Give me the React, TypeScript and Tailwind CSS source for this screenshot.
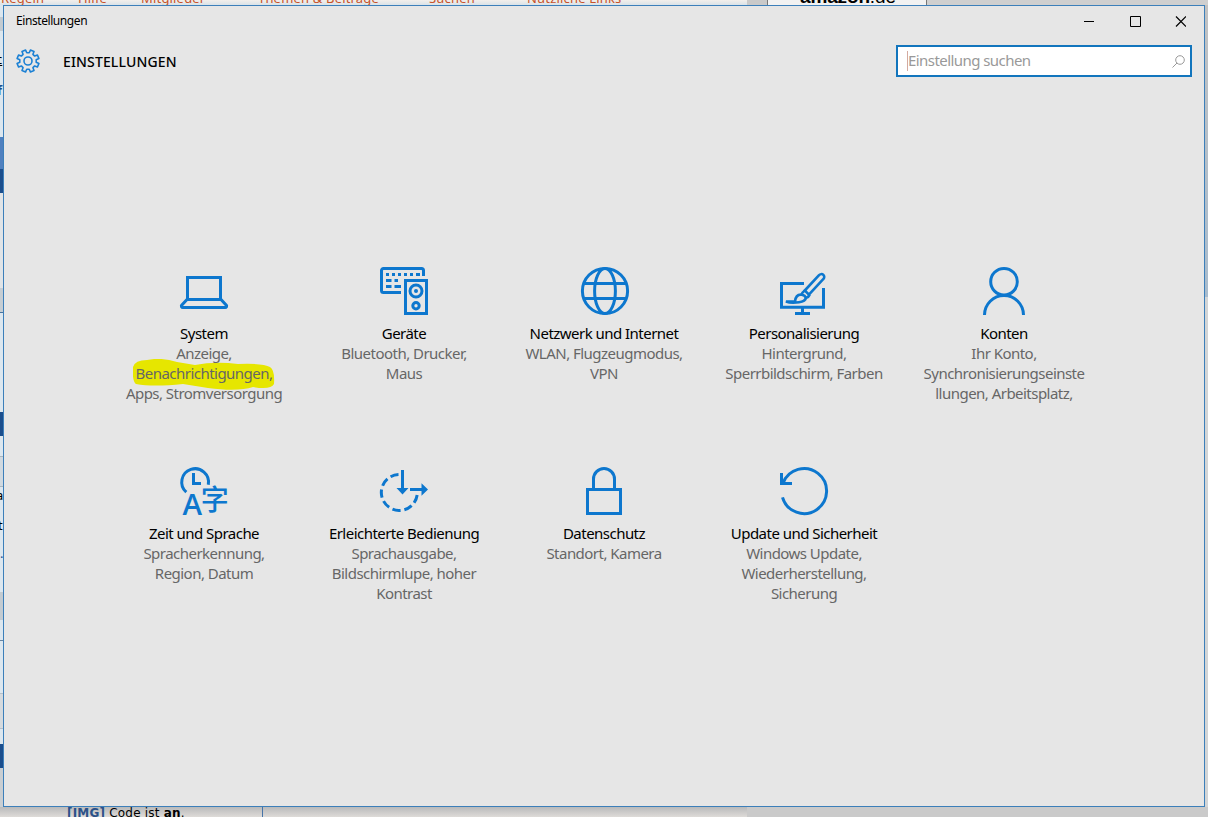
import type { ReactNode } from 'react';

interface Category {
  title: string;
  lines: string[];
  icon: ReactNode;
  highlighted?: boolean;
}

function Icon({ children }: { children: ReactNode }) {
  return (
    <svg className="h-12 w-12 overflow-visible" viewBox="0 0 48 48" fill="none" stroke="#0d77ce" strokeWidth="3">
      {children}
    </svg>
  );
}

function LaptopIcon() {
  return (
    <Icon>
      <path d="M7.5 32V10.5h33V32M7 32.5h34l5.3 5.6c.8 1.2.1 2.4-1.2 2.4H2.9c-1.3 0-2-1.2-1.2-2.4z" />
    </Icon>
  );
}

function DevicesIcon() {
  return (
    <Icon>
      <path d="M21 25.5H3.5a2 2 0 0 1-2-2v-20a2 2 0 0 1 2-2h38a2 2 0 0 1 2 2V9" />
      <path d="M6 7.5h3m3 0h3m3 0h3m3 0h3m3 0h3m3 0h4M6 13.5h5.5m3 0H18M6 19.5h5.5m3 0H21" />
      <rect x="25.5" y="13.5" width="21" height="33" />
      <circle cx="36" cy="24" r="6" />
      <circle cx="36" cy="24" r="2" fill="#0d77ce" stroke="none" />
      <circle cx="36" cy="38.8" r="3.2" />
    </Icon>
  );
}

function GlobeIcon() {
  return (
    <Icon>
      <circle cx="25" cy="24" r="22.6" />
      <ellipse cx="25" cy="24" rx="10.4" ry="22.6" />
      <path d="M4 16.5h42M4 31.5h42" />
    </Icon>
  );
}

function BrushIcon() {
  return (
    <Icon>
      <path d="M24 16.5H1.5v23.8h42V21M22.5 40v6.5M15 46.5h15" />
      <g strokeWidth="2.6">
        <path d="M24.8 23.5 38.8 8.4c1.3-1.4 3.3-1.7 4.6-.5 1.2 1.2 1.1 3.1-.2 4.3L28.9 27.6z" />
        <path d="M24.8 23.5c-2.2 1.6-3.1 2.5-3.2 4.2 2.300.2 3.900 1.500 4.300 3.400 1.900-.4 3-1.700 3.800-3.500" />
        <path d="M21.6 27.7c-4.400-.4-6.200 2.900-6.600 6.800H6c3 1.300 8.400 1.500 13 .8 4-.6 6.500-2 6.900-4.200" />
      </g>
    </Icon>
  );
}

function PersonIcon() {
  return (
    <Icon>
      <circle cx="24" cy="14.7" r="13.3" />
      <path d="M4.5 48c0-10.8 8.7-19.5 19.5-19.5S43.5 37.2 43.5 48" />
    </Icon>
  );
}

function LanguageIcon() {
  return (
    <Icon>
      <path d="M6.3 25.2A13.4 13.4 0 1 1 28.3 17.7" />
      <path d="M13.5 6v10.5h7.5" />
      <g fill="#0d77ce" stroke="none">
        <text
          x="2.5"
          y="48"
          fontSize="29"
          fontWeight="600"
          fontFamily="Open Sans, sans-serif"
          textLength="19"
          lengthAdjust="spacingAndGlyphs"
        >
          A
        </text>
        <text x="20.700" y="43" fontSize="28" fontWeight="500" fontFamily="Noto Sans CJK SC, sans-serif">字</text>
      </g>
    </Icon>
  );
}

function EaseIcon() {
  return (
    <Icon>
      <path d="M18.5 7.5A18 18 0 1 0 37.3 26.5" strokeDasharray="8.3 3.8" />
      <path d="M22.5 3v19M30 22.5h13" />
      <path d="M16.5 21h12l-6 6.5zM41.5 16.3v12.4l6.5-6.2z" fill="#0d77ce" stroke="none" />
    </Icon>
  );
}

function LockIcon() {
  return (
    <Icon>
      <path d="M7.5 22.5h33v24h-33zM13.5 22V12a10.500 10.500 0 0 1 21 0v10" />
    </Icon>
  );
}

function UpdateIcon() {
  return (
    <Icon>
      <path d="M2.5 30.3A22.5 22.5 0 1 0 3 16.2" />
      <path d="M1.5 6v10.500H12" />
    </Icon>
  );
}

function GearIcon() {
  const points: string[] = [];
  for (let i = 0; i < 8; i++) {
    const mid = 22.5 + i * 45;
    [[-14, 8.3], [-10, 11.2], [10, 11.2], [14, 8.3]].forEach(([offset, r]) => {
      const angle = ((mid + offset) * Math.PI) / 180;
      points.push(`${(12 + r * Math.cos(angle)).toFixed(2)},${(12 + r * Math.sin(angle)).toFixed(2)}`);
    });
  }
  return (
    <svg className="h-6 w-6" viewBox="0 0 24 24" fill="none" stroke="#1b80d4" strokeWidth="1.6" strokeLinejoin="round">
      <polygon points={points.join(' ')} />
      <circle cx="12" cy="12" r="4" />
    </svg>
  );
}

const categories: Category[] = [
  {
    title: 'System',
    lines: ['Anzeige,', 'Benachrichtigungen,', 'Apps, Stromversorgung'],
    icon: <LaptopIcon />,
    highlighted: true,
  },
  { title: 'Geräte', lines: ['Bluetooth, Drucker,', 'Maus'], icon: <DevicesIcon /> },
  { title: 'Netzwerk und Internet', lines: ['WLAN, Flugzeugmodus,', 'VPN'], icon: <GlobeIcon /> },
  { title: 'Personalisierung', lines: ['Hintergrund,', 'Sperrbildschirm, Farben'], icon: <BrushIcon /> },
  { title: 'Konten', lines: ['Ihr Konto,', 'Synchronisierungseinste', 'llungen, Arbeitsplatz,'], icon: <PersonIcon /> },
  { title: 'Zeit und Sprache', lines: ['Spracherkennung,', 'Region, Datum'], icon: <LanguageIcon /> },
  { title: 'Erleichterte Bedienung', lines: ['Sprachausgabe,', 'Bildschirmlupe, hoher', 'Kontrast'], icon: <EaseIcon /> },
  { title: 'Datenschutz', lines: ['Standort, Kamera'], icon: <LockIcon /> },
  {
    title: 'Update und Sicherheit',
    lines: ['Windows Update,', 'Wiederherstellung,', 'Sicherung'],
    icon: <UpdateIcon />,
  },
];

function CategoryTile({ title, lines, icon, highlighted }: Category) {
  return (
    <div className="relative flex h-[200px] flex-col items-center text-[15px] leading-5 tracking-[-0.53px] whitespace-nowrap">
      {highlighted && (
        <svg className="absolute top-[92px] left-[29px] h-8 w-[142px]" viewBox="0 0 142 32" fill="#e6e600">
          <path d="M0 8Q2 1 14 1Q28-2 44 3L62 6Q82 2 105 5Q130 4 137 8Q142 11 141 25Q138 31 120 28Q105 33 75 29L50 25Q20 28 3 25Q-1 22 0 8Z" />
        </svg>
      )}
      {icon}
      <div className="relative mt-2 text-black">{title}</div>
      {lines.map((line) => (
        <div key={line} className="relative text-[#666]">{line}</div>
      ))}
    </div>
  );
}

function PageHeader() {
  return (
    <div className="flex h-[5px] overflow-hidden bg-gradient-to-b from-[#f3efeb] to-[#d9e2e8]">
      <div className="flex w-[747px] font-['Noto_Sans'] text-[13px] leading-[14px] tracking-[0.18px] whitespace-nowrap text-[#c8532a]">
        <span className="-mt-[9px] ml-px w-[77px]">Regeln</span>
        <span className="-mt-[9px] w-[63px]">Hilfe</span>
        <span className="-mt-[9px] w-[117px]">Mitglieder</span>
        <span className="-mt-[9px] w-[171px]">Themen &amp; Beiträge</span>
        <span className="-mt-[9px] w-[98px]">Suchen</span>
        <span className="-mt-[9px]">Nützliche Links</span>
      </div>
      <div className="w-5 bg-[#c9c9c9]" />
      <div className="w-40 border-x border-[#777] bg-[#f2f2f2] pl-8 font-['Liberation_Sans'] text-[19px] leading-5 tracking-[-0.15px] text-black">
        <div className="-mt-[13px]"><b>amazon</b>.de</div>
      </div>
      <div className="flex-1 bg-[#cfcfcf]" />
    </div>
  );
}

function PageLeftEdge() {
  return (
    <div className="flex w-[3px] flex-col overflow-hidden bg-[#dce7ef] text-[13px] leading-4">
      <div className="h-3" />
      <div className="h-[14px] bg-[#c3cbd1]" />
      <div className="h-5" />
      <div className="-ml-1 h-[31px] text-black underline">c</div>
      <div className="-ml-[3px] h-[55px] font-bold text-[#1c4f8c]">f</div>
      <div className="h-8 bg-[#4f80bf]" />
      <div className="h-6 bg-[#1b4e8d]" />
      <div className="h-[95px] bg-[#e0e4e7]" />
      <div className="h-[25px] border-b border-[#46739f] bg-[#c5cdd3]" />
      <div className="h-[99px]" />
      <div className="h-6 bg-[#1b4e8d]" />
      <div className="h-5" />
      <div className="h-[31px] border-y border-[#aab5be] bg-[#d0d9e0]" />
      <div className="-ml-1 h-[30px] text-black">a</div>
      <div className="-ml-[2px] h-7 text-black">t</div>
      <div className="h-[47px] text-[#1c4f8c]">.</div>
      <div className="h-7 bg-[#c3cbd1]" />
      <div className="h-[21px] border-b border-[#6584a2]" />
      <div className="h-[52px]" />
      <div className="h-9 border-y border-[#b5c0c9] bg-[#d5dade]" />
      <div className="h-[15px]" />
      <div className="h-6 bg-[#1b4e8d]" />
      <div className="flex-1 bg-[#c9ced2]" />
    </div>
  );
}

function PageFooter() {
  return (
    <div className="flex h-[10px] overflow-hidden bg-gradient-to-b from-[#b9babb] to-[#dedbd8] pl-[67px] font-['DejaVu_Sans'] text-[12px] leading-[14px] whitespace-nowrap">
      <div className="-mt-[1px] w-[196px] border-r border-[#4674a8] tracking-[0.2px] text-black">
        <b className="text-[#2c5289]">[IMG]</b> Code ist <b>an</b>.
      </div>
      <div className="w-[484px]" />
      <div className="flex-1 bg-[#cacaca]" />
    </div>
  );
}

function TitleBar() {
  return (
    <div className="flex h-[30px] items-center justify-between pl-3 text-[12px] text-black">
      <span className="tracking-[-0.42px]">Einstellungen</span>
      <svg className="mr-[18px] h-[11px] w-[102px]" viewBox="0 0 102 11" fill="none" stroke="black">
        <path d="M0 5.5h10M46.5.5h10v10h-10z" />
        <path d="M92 .5l10 10M102 .5l-10 10" strokeWidth="1.2" />
      </svg>
    </div>
  );
}

export default function App() {
  return (
    <div className="flex h-[817px] w-[1208px] flex-col overflow-hidden bg-[#d5d5d5] font-['Noto_Sans',sans-serif]">
      <PageHeader />
      <div className="flex h-[802px]">
        <PageLeftEdge />
        <main className="flex w-[1202px] flex-col border border-[#3c7fba] bg-[#e6e6e6]">
          <TitleBar />
          <div className="flex h-[50px] items-center pr-3 pl-3">
            <GearIcon />
            <h1 className="ml-[23px] text-[14px] font-medium tracking-[0.14px] text-black">EINSTELLUNGEN</h1>
            <div className="ml-auto flex h-8 w-[296px] items-center border-2 border-[#1275bd] bg-white pr-[5px] pl-[9px]">
              <div className="h-5 w-px bg-[#d4aaa0]" />
              <span className="mb-0.5 text-[15px] tracking-[-0.56px] text-[#999]">Einstellung suchen</span>
              <svg className="ml-auto h-[13px] w-[13px]" viewBox="0 0 13 13" fill="none" stroke="#999">
                <circle cx="8" cy="5" r="4.3" />
                <path d="M5 8 .5 12.5" />
              </svg>
            </div>
          </div>
          <div className="mt-[181px] ml-[100px] grid w-[1000px] grid-cols-5">
            {categories.map((category) => (
              <CategoryTile key={category.title} {...category} />
            ))}
          </div>
        </main>
        <div className="flex flex-1 flex-col bg-[#d3d5d6]">
          <div className="h-[292px] bg-gradient-to-b from-[#c2c2c2] to-[#a9bccd]" />
        </div>
      </div>
      <PageFooter />
    </div>
  );
}
